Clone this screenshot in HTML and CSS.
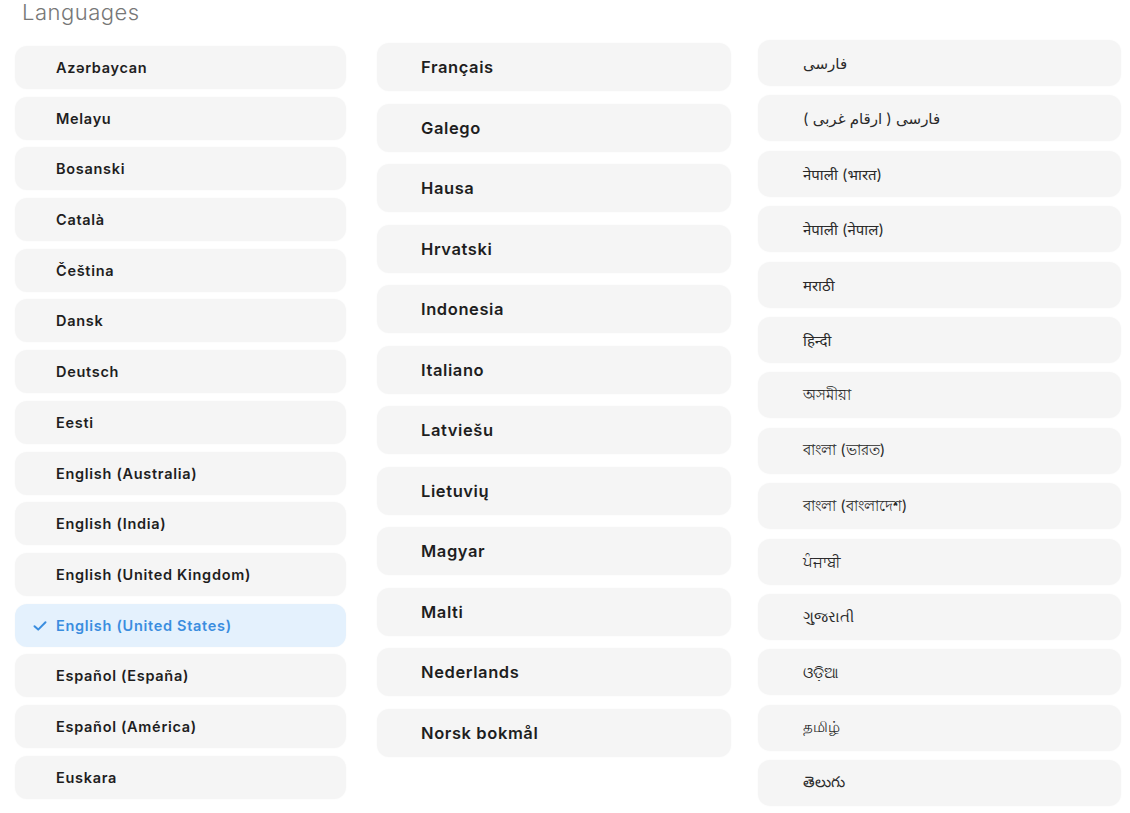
FILE: index.html
```html
<!DOCTYPE html>
<html lang="en">
<head>
<meta charset="utf-8">
<title>Languages</title>
<link rel="stylesheet" href="styles.css">
</head>
<body>
<h1 class="title">Languages</h1>
<div class="grid">
  <div class="col col-a">
    <div class="item">Azərbaycan</div>
    <div class="item">Melayu</div>
    <div class="item">Bosanski</div>
    <div class="item">Català</div>
    <div class="item">Čeština</div>
    <div class="item">Dansk</div>
    <div class="item">Deutsch</div>
    <div class="item">Eesti</div>
    <div class="item">English (Australia)</div>
    <div class="item">English (India)</div>
    <div class="item">English (United Kingdom)</div>
    <div class="item selected"><svg class="check" viewBox="0 0 14 12" width="14" height="12"><path d="M1.5 6.2 L5.2 9.6 L12.5 2.2" fill="none" stroke="currentColor" stroke-width="2" stroke-linecap="round" stroke-linejoin="round"/></svg>English (United States)</div>
    <div class="item">Español (España)</div>
    <div class="item">Español (América)</div>
    <div class="item">Euskara</div>
  </div>
  <div class="col col-b">
    <div class="item">Français</div>
    <div class="item">Galego</div>
    <div class="item">Hausa</div>
    <div class="item">Hrvatski</div>
    <div class="item">Indonesia</div>
    <div class="item">Italiano</div>
    <div class="item">Latviešu</div>
    <div class="item">Lietuvių</div>
    <div class="item">Magyar</div>
    <div class="item">Malti</div>
    <div class="item">Nederlands</div>
    <div class="item">Norsk bokmål</div>
  </div>
  <div class="col col-c">
    <div class="item">فارسی</div>
    <div class="item">فارسی ( ارقام غربی )</div>
    <div class="item">नेपाली (भारत)</div>
    <div class="item">नेपाली (नेपाल)</div>
    <div class="item">मराठी</div>
    <div class="item">हिन्दी</div>
    <div class="item">অসমীয়া</div>
    <div class="item">বাংলা (ভারত)</div>
    <div class="item">বাংলা (বাংলাদেশ)</div>
    <div class="item">ਪੰਜਾਬੀ</div>
    <div class="item">ગુજરાતી</div>
    <div class="item">ଓଡ଼ିଆ</div>
    <div class="item">தமிழ்</div>
    <div class="item">తెలుగు</div>
  </div>
</div>
</body>
</html>
```
FILE: styles.css
```css
html, body {
  margin: 0;
  padding: 0;
  background: #ffffff;
}
body {
  font-family: Inter, "Noto Sans", "DejaVu Sans", sans-serif;
  width: 1130px;
  height: 813px;
  overflow: hidden;
}
.title {
  margin: 0;
  padding: 0 0 0 22px;
  height: 24px;
  font-size: 22px;
  line-height: 24px;
  font-weight: 300;
  color: #777777;
  letter-spacing: 0.5px;
}
.grid {
  display: flex;
  align-items: flex-start;
  padding-left: 15px;
}
.col {
  display: flex;
  flex-direction: column;
  flex: none;
}
.col-a { width: 331px; gap: 7.7px; margin-top: 22px; }
.col-b { width: 354px; gap: 12.5px; margin-top: 19px; margin-left: 31px; }
.col-c { width: 363px; gap: 9.4px; margin-top: 16px; margin-left: 27px; }
.item {
  display: flex;
  align-items: center;
  background: #f5f5f5;
  border-radius: 12px;
  box-shadow: 0 0 2px rgba(0,0,0,0.03);
  color: #1e1e1e;
  font-weight: 600;
  box-sizing: border-box;
}
.col-a .item {
  height: 43px;
  padding-left: 41px;
  font-size: 14.5px;
  letter-spacing: 0.7px;
}
.col-b .item {
  height: 48px;
  padding-left: 44px;
  font-size: 16.5px;
  letter-spacing: 0.6px;
}
.col-c .item {
  height: 46px;
  padding-left: 45px;
  font-size: 15px;
  font-weight: 400;
  color: #2a2a2a;
}
.item.selected {
  background: #e4f1fd;
  color: #3a8ddf;
  position: relative;
}
.check {
  position: absolute;
  left: 18px;
  top: 16px;
  color: #3a8ddf;
}
```
